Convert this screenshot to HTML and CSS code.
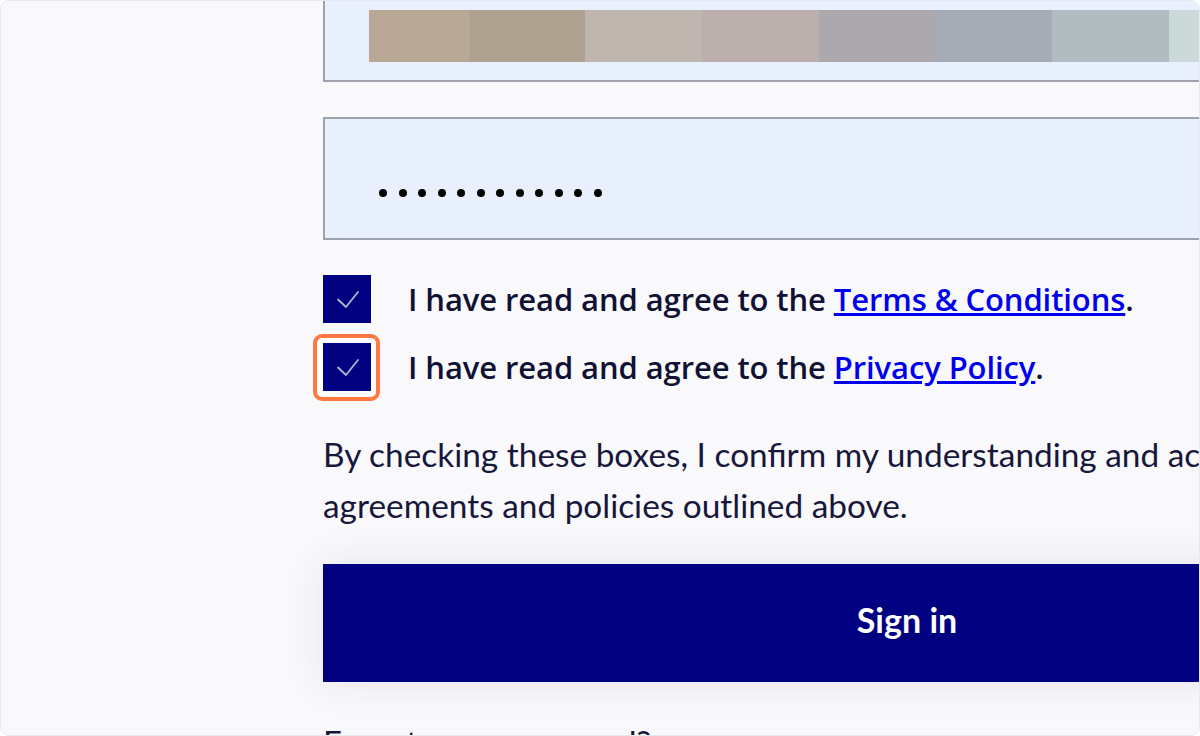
FILE: index.html
```html
<!DOCTYPE html>
<html lang="en">
<head>
  <meta charset="UTF-8" />
  <title>Sign in</title>
  <meta name="viewport" content="width=device-width, initial-scale=1.0" />
  <link rel="stylesheet" href="styles.css">
</head>
<body>
<div class="frame">
  <form class="login">
    <div class="field avatar-field">
      <div class="swatches">
        <span class="sw1"></span>
        <span class="sw2"></span>
        <span class="sw3"></span>
        <span class="sw4"></span>
        <span class="sw5"></span>
        <span class="sw6"></span>
        <span class="sw7"></span>
        <span class="sw8"></span>
      </div>
    </div>

    <div class="field password-field">
      <div class="dots">
        <i></i><i></i><i></i><i></i><i></i><i></i>
        <i></i><i></i><i></i><i></i><i></i><i></i>
      </div>
    </div>

    <div class="agree">
      <label class="agree-row">
        <span class="check">
          <svg width="48" height="48" viewBox="0 0 48 48"><path d="M15 24.5 L23 32 L35 17" fill="none" stroke="#b4b4d2" stroke-width="1.8" stroke-linecap="round" stroke-linejoin="round"/></svg>
        </span>
        <span class="agree-text">I have read and agree to the <a href="#">Terms &amp; Conditions</a>.</span>
      </label>
      <label class="agree-row">
        <span class="check highlighted">
          <svg width="48" height="48" viewBox="0 0 48 48"><path d="M15 24.5 L23 32 L35 17" fill="none" stroke="#b4b4d2" stroke-width="1.8" stroke-linecap="round" stroke-linejoin="round"/></svg>
        </span>
        <span class="agree-text">I have read and agree to the <a href="#">Privacy Policy</a>.</span>
      </label>
    </div>

    <p class="note">By checking these boxes, I confirm my understanding and acceptance of the agreements and policies outlined above.</p>

    <button type="button" class="signin">Sign in</button>

    <a href="#" class="forgot">Forgot your password?</a>
  </form>
</div>
</body>
</html>
```

FILE: styles.css
```css
* {
  box-sizing: border-box;
}

html, body {
  margin: 0;
  background: #ffffff;
}

body {
  font-family: Lato, 'Open Sans', sans-serif;
  color: #15153a;
}

.frame {
  width: 1200px;
  height: 736px;
  border: 1px solid #e8e9ee;
  border-radius: 9px;
  background: #f9f9fc;
  overflow: hidden;
}

.login {
  width: 1168px;
  margin: -42px 0 0 322px;
  display: flex;
  flex-direction: column;
}

.field {
  height: 123px;
  background: #e8f0fe;
  border: 2px solid #9ea2ac;
}

/* blurred avatar strip */
.avatar-field {
  padding: 49px 0 0 44px;
}
.swatches {
  display: flex;
  height: 52px;
}
.swatches span {
  display: block;
  height: 52px;
  width: 117px;
}
.sw1 { background: #b9a896; width: 101px !important; }
.sw2 { background: #aea190; width: 115px !important; }
.sw3 { background: #c0b6b0; }
.sw4 { background: #bbafad; }
.sw5 { background: #aba9ae; }
.sw6 { background: #a6abb6; width: 116px !important; }
.sw7 { background: #b1bcc1; }
.sw8 { background: #cbdad9; }

.password-field {
  margin-top: 35px;
  padding: 70px 0 0 54px;
}
.dots {
  display: flex;
  gap: 11.5px;
}
.dots i {
  display: block;
  width: 8px;
  height: 8px;
  border-radius: 50%;
  background: #000;
}

.agree {
  margin-top: 35px;
  display: flex;
  flex-direction: column;
  gap: 20px;
}
.agree-row {
  display: flex;
  align-items: center;
  gap: 37px;
}
.check {
  position: relative;
  width: 48px;
  height: 48px;
  flex: none;
  background: #000080;
}
.check svg {
  display: block;
}
.check.highlighted {
  box-shadow: 0 0 0 5px #ffffff;
}
.check.highlighted::before {
  content: '';
  position: absolute;
  top: -9px;
  left: -10px;
  right: -9px;
  bottom: -10px;
  border: 4px solid #ff7844;
  border-radius: 9px;
}
.agree-text {
  font-family: 'Open Sans', sans-serif;
  font-weight: 600;
  font-size: 31px;
  letter-spacing: -0.1px;
  color: #111133;
  white-space: nowrap;
}
.agree-text a {
  color: #0000ee;
}

.note {
  margin: 38px 0 0;
  font-size: 33.4px;
  line-height: 51px;
  color: #17173a;
}

.signin {
  margin-top: 33px;
  height: 118px;
  width: 100%;
  padding-bottom: 8px;
  border: none;
  background: #000080;
  color: #ffffff;
  font-family: Lato, sans-serif;
  font-weight: 700;
  font-size: 34px;
  box-shadow: 0 0 40px rgba(20, 20, 90, 0.09);
  cursor: pointer;
}

.forgot {
  margin-top: 40px;
  font-size: 33px;
  color: #15153a;
  text-decoration: none;
}
```
